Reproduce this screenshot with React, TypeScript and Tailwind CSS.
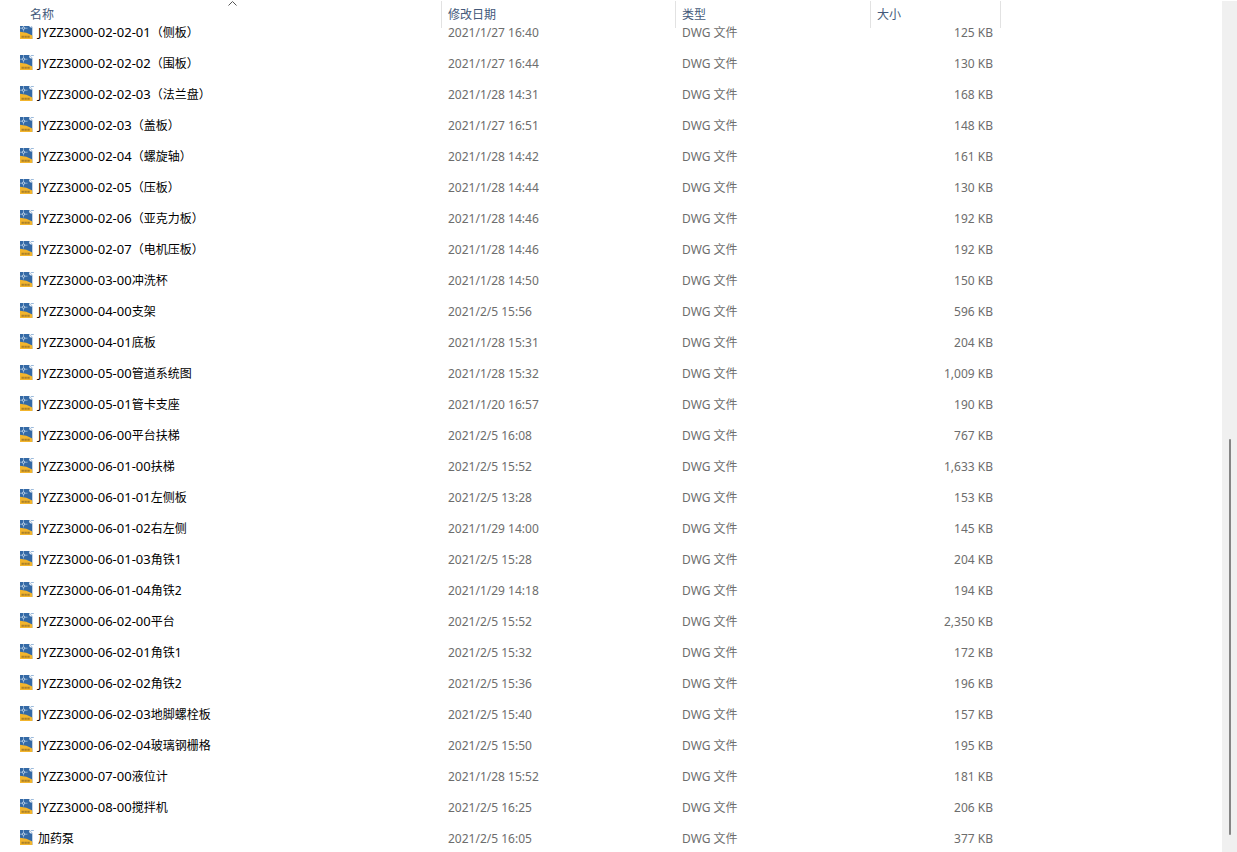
interface DrawingFile {
  code: string;
  label: string;
  modified: string;
  size: string;
}

const files: DrawingFile[] = [
  { code: "JYZZ3000-02-02-01", label: "（侧板）", modified: "2021/1/27 16:40", size: "125 KB" },
  { code: "JYZZ3000-02-02-02", label: "（围板）", modified: "2021/1/27 16:44", size: "130 KB" },
  { code: "JYZZ3000-02-02-03", label: "（法兰盘）", modified: "2021/1/28 14:31", size: "168 KB" },
  { code: "JYZZ3000-02-03", label: "（盖板）", modified: "2021/1/27 16:51", size: "148 KB" },
  { code: "JYZZ3000-02-04", label: "（螺旋轴）", modified: "2021/1/28 14:42", size: "161 KB" },
  { code: "JYZZ3000-02-05", label: "（压板）", modified: "2021/1/28 14:44", size: "130 KB" },
  { code: "JYZZ3000-02-06", label: "（亚克力板）", modified: "2021/1/28 14:46", size: "192 KB" },
  { code: "JYZZ3000-02-07", label: "（电机压板）", modified: "2021/1/28 14:46", size: "192 KB" },
  { code: "JYZZ3000-03-00", label: "冲洗杯", modified: "2021/1/28 14:50", size: "150 KB" },
  { code: "JYZZ3000-04-00", label: "支架", modified: "2021/2/5 15:56", size: "596 KB" },
  { code: "JYZZ3000-04-01", label: "底板", modified: "2021/1/28 15:31", size: "204 KB" },
  { code: "JYZZ3000-05-00", label: "管道系统图", modified: "2021/1/28 15:32", size: "1,009 KB" },
  { code: "JYZZ3000-05-01", label: "管卡支座", modified: "2021/1/20 16:57", size: "190 KB" },
  { code: "JYZZ3000-06-00", label: "平台扶梯", modified: "2021/2/5 16:08", size: "767 KB" },
  { code: "JYZZ3000-06-01-00", label: "扶梯", modified: "2021/2/5 15:52", size: "1,633 KB" },
  { code: "JYZZ3000-06-01-01", label: "左侧板", modified: "2021/2/5 13:28", size: "153 KB" },
  { code: "JYZZ3000-06-01-02", label: "右左侧", modified: "2021/1/29 14:00", size: "145 KB" },
  { code: "JYZZ3000-06-01-03", label: "角铁1", modified: "2021/2/5 15:28", size: "204 KB" },
  { code: "JYZZ3000-06-01-04", label: "角铁2", modified: "2021/1/29 14:18", size: "194 KB" },
  { code: "JYZZ3000-06-02-00", label: "平台", modified: "2021/2/5 15:52", size: "2,350 KB" },
  { code: "JYZZ3000-06-02-01", label: "角铁1", modified: "2021/2/5 15:32", size: "172 KB" },
  { code: "JYZZ3000-06-02-02", label: "角铁2", modified: "2021/2/5 15:36", size: "196 KB" },
  { code: "JYZZ3000-06-02-03", label: "地脚螺栓板", modified: "2021/2/5 15:40", size: "157 KB" },
  { code: "JYZZ3000-06-02-04", label: "玻璃钢栅格", modified: "2021/2/5 15:50", size: "195 KB" },
  { code: "JYZZ3000-07-00", label: "液位计", modified: "2021/1/28 15:52", size: "181 KB" },
  { code: "JYZZ3000-08-00", label: "搅拌机", modified: "2021/2/5 16:25", size: "206 KB" },
  { code: "", label: "加药泵", modified: "2021/2/5 16:05", size: "377 KB" },
];

const columns = "grid grid-cols-[442px_234px_195px_130px]";

function DwgIcon() {
  return (
    <svg className="w-4 h-4 shrink-0" viewBox="0 1 16 16" aria-hidden="true">
      <path d="M1 1H10.5L13.3 4V16H1Z" fill="#3469a5" />
      <path d="M10.2 1L13.6 4.4H11.6Q10.2 4.2 10.2 2.8Z" fill="#eef4fa" />
      <path d="M12 1.5H14.8" stroke="#9dbbdc" strokeWidth="1" />
      {/* crosshair */}
      <path d="M4.5 1V4M4.5 6.5V8.5M1 5.2H3.2M5.8 5.2H8.5" stroke="#9fbedd" strokeWidth="0.8" />
      <circle cx="4.5" cy="5.2" r="1.2" fill="none" stroke="#d7e5f3" strokeWidth="0.8" />
      <path d="M1 8.8Q7.5 9.2 13.3 12.4V16H1Z" fill="#f3b52c" />
      {/* format strip */}
      <path
        d="M2.5 13.8H11"
        stroke="#8a6a2a"
        strokeOpacity="0.7"
        strokeWidth="2"
        strokeDasharray="2.4 0.5"
      />
    </svg>
  );
}

function HeaderCell({ title, sorted }: { title: string; sorted?: boolean }) {
  return (
    <th
      scope="col"
      aria-sort={sorted ? "ascending" : undefined}
      className="relative h-[27px] mt-px border-r border-[#e2e2e2] font-normal"
    >
      <button
        type="button"
        className={`w-full h-full flex items-center text-left text-xs text-[#44597a] ${sorted ? "pl-[30px]" : "pl-1.5"}`}
      >
        {title}
      </button>
      {sorted && (
        <svg
          className="absolute top-0 left-[228px] w-[9px] h-[5px]"
          viewBox="0 0 9 5"
          fill="none"
          stroke="#555"
          aria-hidden="true"
        >
          <path d="M0.5 4.5L4.5 0.5L8.5 4.5" />
        </svg>
      )}
    </th>
  );
}

function FileRow({ file }: { file: DrawingFile }) {
  return (
    <tr className={`${columns} h-[31px] items-center text-[#6d6d6d]`}>
      <td className="flex items-center gap-[3px] pl-[19px] text-black whitespace-nowrap">
        <DwgIcon />
        <span>
          <span className="text-[13px]">{file.code}</span>
          {file.label}
        </span>
      </td>
      <td className="pl-1.5">{file.modified}</td>
      <td className="pl-1.5">DWG 文件</td>
      <td className="pr-2 text-right">{file.size}</td>
    </tr>
  );
}

export default function App() {
  return (
    <div className="h-screen flex overflow-hidden bg-white font-['Noto_Sans','Noto_Sans_CJK_SC',sans-serif] text-xs">
      <main className="flex-1 min-w-0 overflow-hidden">
        <table className="block">
          <thead className="block relative z-10 bg-white h-[26px]">
            <tr className={columns}>
              <HeaderCell title="名称" sorted />
              <HeaderCell title="修改日期" />
              <HeaderCell title="类型" />
              <HeaderCell title="大小" />
            </tr>
          </thead>
          {/* list is scrolled, so the first row sits partly under the header */}
          <tbody className="block -mt-[9px]">
            {files.map((file) => (
              <FileRow key={file.code + file.label} file={file} />
            ))}
          </tbody>
        </table>
      </main>

      {/* Scrollbar */}
      <div className="w-[15px] mt-px flex flex-col items-center bg-[#f0f0f0]" aria-hidden="true">
        <div className="grow-[438]" />
        <div className="w-0.5 grow-[396] rounded-full bg-[#858585]" />
        <div className="grow-[17]" />
      </div>
    </div>
  );
}
